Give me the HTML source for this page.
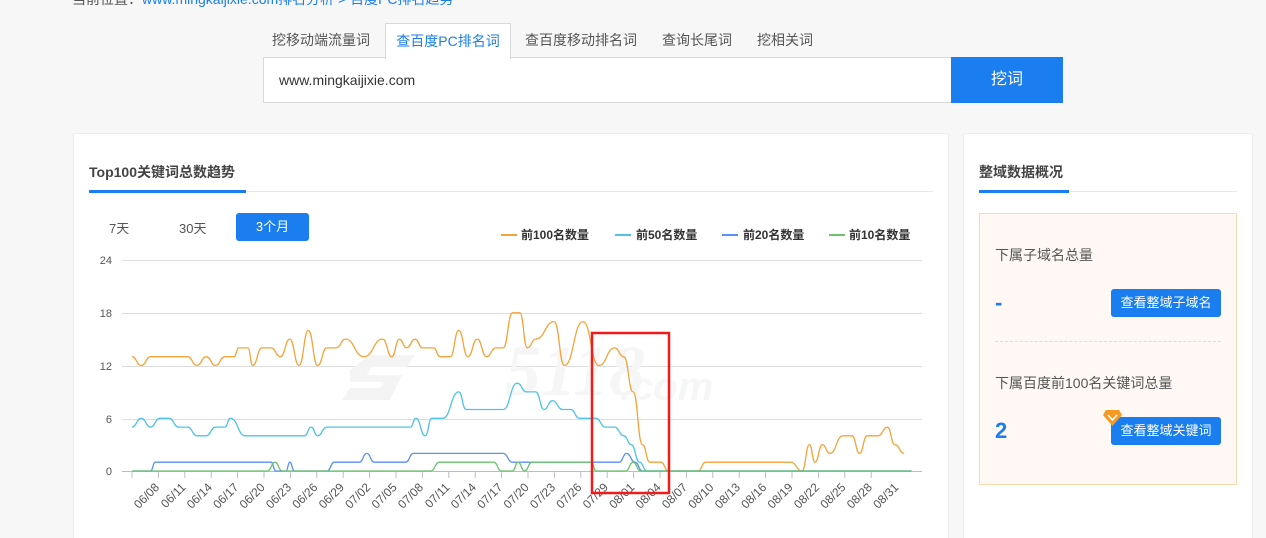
<!DOCTYPE html>
<html><head><meta charset="utf-8"><style>
*{margin:0;padding:0;box-sizing:border-box}
html,body{width:1266px;height:538px;overflow:hidden}
body{background:#f7f7f7;font-family:"Liberation Sans","Noto Sans CJK SC",sans-serif;position:relative;color:#333}
.a{position:absolute}
.tab{position:absolute;top:24px;height:34px;line-height:33px;font-size:14px;color:#555}
</style></head><body>
<div class="a" style="left:72px;top:-11px;font-size:14px;color:#555">当前位置：<span style="color:#1a7ef0">www.mingkaijixie.com排名分析 &gt; 百度PC排名趋势</span></div>
<div class="tab" style="left:272px">挖移动端流量词</div>
<div class="a" style="left:385px;top:23px;width:126px;height:36px;background:#fff;border:1px solid #d9d9d9;border-bottom:none;z-index:2;text-align:center;line-height:34px;font-size:14px;color:#1a7ef0">查百度PC排名词</div>
<div class="tab" style="left:525px">查百度移动排名词</div>
<div class="tab" style="left:662px">查询长尾词</div>
<div class="tab" style="left:757px">挖相关词</div>
<div class="a" style="left:263px;top:57px;width:689px;height:46px;background:#fff;border:1px solid #d9d9d9;font-size:14px;line-height:44px;padding-left:15px;color:#333">www.mingkaijixie.com</div>
<div class="a" style="left:951px;top:57px;width:112px;height:46px;background:#1a7ef0;color:#fff;font-size:16px;text-align:center;line-height:46px">挖词</div>

<div class="a" style="left:73px;top:133px;width:876px;height:420px;background:#fff;border:1px solid #ececec"></div>
<div class="a" style="left:89px;top:162px;font-size:14px;font-weight:bold;color:#444">Top100关键词总数趋势</div>
<div class="a" style="left:89px;top:191px;width:844px;height:1px;background:#e6e6e6"></div>
<div class="a" style="left:89px;top:190px;width:157px;height:3px;background:#1a7ef0"></div>
<div class="a" style="left:109px;top:218px;font-size:13px;color:#555">7天</div>
<div class="a" style="left:179px;top:218px;font-size:13px;color:#555">30天</div>
<div class="a" style="left:236px;top:213px;width:73px;height:28px;background:#1a7ef0;border-radius:3px;color:#fff;font-size:13px;text-align:center;line-height:28px">3个月</div>

<svg class="a" style="left:0;top:0" width="1266" height="538">
<g font-size="12" font-weight="bold" fill="#333">
<line x1="501" y1="235" x2="517" y2="235" stroke="#f5a33b" stroke-width="2"/><text x="521" y="239">前100名数量</text>
<line x1="615" y1="235" x2="631" y2="235" stroke="#4fc3e8" stroke-width="2"/><text x="636" y="239">前50名数量</text>
<line x1="722" y1="235" x2="738" y2="235" stroke="#5b8ff9" stroke-width="2"/><text x="743" y="239">前20名数量</text>
<line x1="829" y1="235" x2="845" y2="235" stroke="#6cc36c" stroke-width="2"/><text x="849" y="239">前10名数量</text>
</g>
<g stroke="#ddd" stroke-width="1">
<line x1="122" y1="260.5" x2="922" y2="260.5"/><line x1="122" y1="313.5" x2="922" y2="313.5"/><line x1="122" y1="366.5" x2="922" y2="366.5"/><line x1="122" y1="419.5" x2="922" y2="419.5"/>
</g>
<line x1="122" y1="471.5" x2="922" y2="471.5" stroke="#bbc" />
<g font-size="11" fill="#555" text-anchor="end"><text x="112" y="264">24</text><text x="112" y="317">18</text><text x="112" y="370">12</text><text x="112" y="423">6</text><text x="112" y="475">0</text></g>
<text x="505" y="395" font-size="72" font-style="italic" font-weight="bold" fill="#f6f6f6" font-family="Liberation Serif">5118</text>
<text x="620" y="400" font-size="40" font-style="italic" font-weight="bold" fill="#f6f6f6">.com</text>
<path d="M350 370 l20 -15 h45 l-8 12 h-35 l-5 8 h35 l-12 25 h-48 l8 -12 h30 l4 -6 h-34z" fill="#f4f4f4"/>
<g id="ax"></g>
<g id="ln" fill="none" stroke-width="1.3"></g>
<rect x="592" y="333" width="77" height="160" fill="none" stroke="#f01c1c" stroke-width="2.5"/>
</svg>

<div class="a" style="left:963px;top:133px;width:290px;height:420px;background:#fff;border:1px solid #ececec"></div>
<div class="a" style="left:979px;top:162px;font-size:14px;font-weight:bold;color:#444">整域数据概况</div>
<div class="a" style="left:979px;top:191px;width:258px;height:1px;background:#e6e6e6"></div>
<div class="a" style="left:979px;top:190px;width:90px;height:3px;background:#1a7ef0"></div>
<div class="a" style="left:979px;top:213px;width:258px;height:272px;background:#fff8f4;border:1px solid #f9dcae"></div>
<div class="a" style="left:995px;top:245px;font-size:14px;color:#555">下属子域名总量</div>
<div class="a" style="left:995px;top:290px;font-size:22px;font-weight:bold;color:#1a7ef0">-</div>
<div class="a" style="left:1111px;top:289px;width:110px;height:28px;background:#1a7ef0;border-radius:3px;color:#fff;font-size:13px;text-align:center;line-height:28px">查看整域子域名</div>
<div class="a" style="left:995px;top:341px;width:226px;border-top:1px dashed #ddd"></div>
<div class="a" style="left:995px;top:373px;font-size:14px;color:#555">下属百度前100名关键词总量</div>
<div class="a" style="left:995px;top:418px;font-size:22px;font-weight:bold;color:#1a7ef0">2</div>
<div class="a" style="left:1111px;top:417px;width:110px;height:28px;background:#1a7ef0;border-radius:3px;color:#fff;font-size:13px;text-align:center;line-height:28px">查看整域关键词</div>
<svg class="a" style="left:1103px;top:409px" width="20" height="18"><path d="M3 1h13l3 5-9.5 11L0 6z" fill="#f59a23"/><path d="M5 6l4.5 5 4.5-5" stroke="#fff" stroke-width="1.5" fill="none"/></svg>

<script>
var X=function(d){return 132+d*9.28},Y=function(v){return 471-v*8.79};
function path(pts){var s="M"+X(pts[0][0]).toFixed(1)+" "+Y(pts[0][1]).toFixed(1);for(var i=1;i<pts.length;i++){var x0=X(pts[i-1][0]),x1=X(pts[i][0]),y0=Y(pts[i-1][1]),y1=Y(pts[i][1]),m=(x0+x1)/2;s+=" C"+m.toFixed(1)+" "+y0.toFixed(1)+" "+m.toFixed(1)+" "+y1.toFixed(1)+" "+x1.toFixed(1)+" "+y1.toFixed(1);}return s}
var O=[[0,13],[1,12],[2,13],[6,13],[7,12],[8,13],[9,12],[10,13],[11,13],[11.5,14],[12.5,14],[13,12],[14,14],[15,14],[16,13],[17,15],[18,12],[19,16],[20,12],[21,14],[22,14],[23,15],[25,13],[27,15],[28,13],[28.8,15],[29.6,14],[30.5,15],[31.3,14],[32.5,14],[33.2,13],[34.3,13],[35.2,16],[36.2,13],[37.2,15],[38.2,13],[39.2,14],[40,14],[41,18],[41.8,18],[42.6,14],[43.5,15],[45.5,17],[46.6,12],[48.6,17],[50.3,12],[52,14],[53,13],[54,9],[55,3],[55.8,1],[57,1],[57.8,0],[61,0],[61.8,1],[71,1],[72.2,0],[73,3],[73.6,1],[74.4,3],[75.2,2],[76.6,4],[77.6,4],[78.4,2],[79.2,4],[80.4,4],[81.4,5],[82.2,3],[83.2,2]];
var B=[[0,5],[1,6],[2,5],[3,6],[4,6],[5,5],[6,5],[7,4],[8,4],[9,5],[10,5],[10.6,6],[12.2,4],[18.6,4],[19.3,5],[20,4],[21,5],[30,5],[30.6,6],[31.6,4],[32.3,6],[33.5,6],[35.2,9],[36,7],[40,7],[41.5,10],[42.5,9],[43.5,9],[44.4,7],[45.3,8],[46.4,7],[47.3,7],[48.2,6],[50,6],[51,5],[52,5],[53,4],[53.8,3],[54.7,1],[55.5,0],[84,0]];
var C=[[0,0],[2,0],[2.5,1],[15,1],[15.5,0],[16.6,0],[17,1],[17.5,0],[21,0],[21.8,1],[24.5,1],[25.3,2],[26.1,1],[29.5,1],[30.3,2],[40,2],[41,1],[52.5,1],[53.3,2],[54.2,1],[55,0],[84,0]];
var G=[[0,0],[14.6,0],[15.4,1],[16.2,0],[32.2,0],[33.1,1],[39,1],[39.8,0],[41,0],[41.6,1],[42.3,0],[43.1,1],[49.5,1],[50,0],[53.2,0],[54,1],[54.8,0],[84,0]];
var ln=document.getElementById("ln"),ns="http://www.w3.org/2000/svg";
[[O,"#f5a33b"],[B,"#4fc3e8"],[C,"#5b8ff9"],[G,"#6cc36c"]].forEach(function(p){var e=document.createElementNS(ns,"path");e.setAttribute("d",path(p[0]));e.setAttribute("stroke",p[1]);ln.appendChild(e)});
var ax=document.getElementById("ax"),lab=["06/08","06/11","06/14","06/17","06/20","06/23","06/26","06/29","07/02","07/05","07/08","07/11","07/14","07/17","07/20","07/23","07/26","07/29","08/01","08/04","08/07","08/10","08/13","08/16","08/19","08/22","08/25","08/28","08/31"];
lab.forEach(function(t,k){var x=132+k*26.4;var l=document.createElementNS(ns,"line");l.setAttribute("x1",x);l.setAttribute("x2",x);l.setAttribute("y1",472);l.setAttribute("y2",478);l.setAttribute("stroke","#bbc");ax.appendChild(l);var tx=document.createElementNS(ns,"text");tx.setAttribute("transform","translate("+(x+28)+",488) rotate(-45)");tx.setAttribute("text-anchor","end");tx.setAttribute("font-size","12");tx.setAttribute("fill","#555");tx.textContent=t;ax.appendChild(tx)});
</script>
</body></html>
